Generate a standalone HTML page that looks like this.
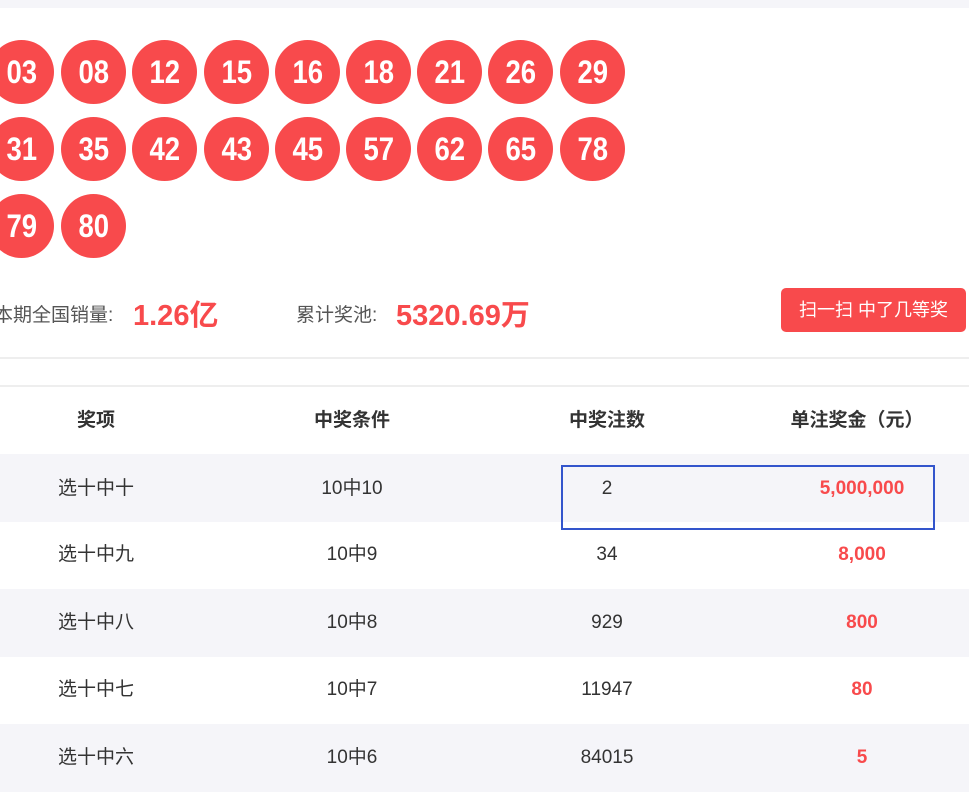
<!DOCTYPE html>
<html><head><meta charset="utf-8"><style>
*{margin:0;padding:0;box-sizing:border-box}
body{width:969px;height:788px;overflow:hidden;background:#fff;font-family:"Liberation Sans","Noto Sans CJK SC",sans-serif;position:relative;color:#333}
.top{position:absolute;left:0;top:0;width:969px;height:8px;background:#f5f5f9}
.ball{position:absolute;width:65px;height:64px;border-radius:50%;background:#f84a4c;color:#fff;font-weight:bold;font-size:32px;text-align:center;line-height:64px}
.ball span{display:inline-block;transform:scaleX(.86)}
.lbl{position:absolute;top:300px;font-size:19px;color:#555}
.big{position:absolute;font-size:29px;font-weight:bold;color:#f84a4c;top:292px}
.btn{position:absolute;left:781px;top:288px;width:185px;height:44px;border-radius:5px;background:#f84a4c;color:#fff;font-size:18px;text-align:center;line-height:44px}
.hr{position:absolute;left:0;width:969px;height:2px;background:#eee}
.row{position:absolute;left:0;width:969px;height:68px;font-size:19px}
.row div{position:absolute;top:0;line-height:68px;text-align:center;width:200px}
.g{background:#f5f5f9}
.red{color:#f84a4c;font-weight:bold}
.hd div{font-weight:bold}
.box{position:absolute;left:561px;top:465px;width:374px;height:65px;border:2px solid #3355cc}
</style></head><body>
<div class="top"></div>
<div class="ball" style="left:-11px;top:40px"><span>03</span></div>
<div class="ball" style="left:61px;top:40px"><span>08</span></div>
<div class="ball" style="left:132px;top:40px"><span>12</span></div>
<div class="ball" style="left:204px;top:40px"><span>15</span></div>
<div class="ball" style="left:275px;top:40px"><span>16</span></div>
<div class="ball" style="left:346px;top:40px"><span>18</span></div>
<div class="ball" style="left:417px;top:40px"><span>21</span></div>
<div class="ball" style="left:488px;top:40px"><span>26</span></div>
<div class="ball" style="left:560px;top:40px"><span>29</span></div>
<div class="ball" style="left:-11px;top:117px"><span>31</span></div>
<div class="ball" style="left:61px;top:117px"><span>35</span></div>
<div class="ball" style="left:132px;top:117px"><span>42</span></div>
<div class="ball" style="left:204px;top:117px"><span>43</span></div>
<div class="ball" style="left:275px;top:117px"><span>45</span></div>
<div class="ball" style="left:346px;top:117px"><span>57</span></div>
<div class="ball" style="left:417px;top:117px"><span>62</span></div>
<div class="ball" style="left:488px;top:117px"><span>65</span></div>
<div class="ball" style="left:560px;top:117px"><span>78</span></div>
<div class="ball" style="left:-11px;top:194px"><span>79</span></div>
<div class="ball" style="left:61px;top:194px"><span>80</span></div>
<div class="lbl" style="left:-6px">本期全国销量:</div>
<div class="big" style="left:133px">1.26亿</div>
<div class="lbl" style="left:296px">累计奖池:</div>
<div class="big" style="left:396px">5320.69万</div>
<div class="btn">扫一扫 中了几等奖</div>
<div class="hr" style="top:357px"></div>
<div class="hr" style="top:385px"></div>
<div class="row hd" style="top:387px"><div style="left:-4px">奖项</div><div style="left:252px">中奖条件</div><div style="left:507px">中奖注数</div><div style="left:757px">单注奖金（元）</div></div>
<div class="row g" style="top:454px"><div style="left:-4px;line-height:70px">选十中十</div><div style="left:252px;line-height:70px">10中10</div><div style="left:507px;line-height:70px">2</div><div class="red" style="left:762px;line-height:70px">5,000,000</div></div>
<div class="row" style="top:521px"><div style="left:-4px">选十中九</div><div style="left:252px">10中9</div><div style="left:507px">34</div><div class="red" style="left:762px">8,000</div></div>
<div class="row g" style="top:589px"><div style="left:-4px">选十中八</div><div style="left:252px">10中8</div><div style="left:507px">929</div><div class="red" style="left:762px">800</div></div>
<div class="row" style="top:656px"><div style="left:-4px">选十中七</div><div style="left:252px">10中7</div><div style="left:507px">11947</div><div class="red" style="left:762px">80</div></div>
<div class="row g" style="top:724px"><div style="left:-4px">选十中六</div><div style="left:252px">10中6</div><div style="left:507px">84015</div><div class="red" style="left:762px">5</div></div>
<div class="box"></div>
</body></html>
